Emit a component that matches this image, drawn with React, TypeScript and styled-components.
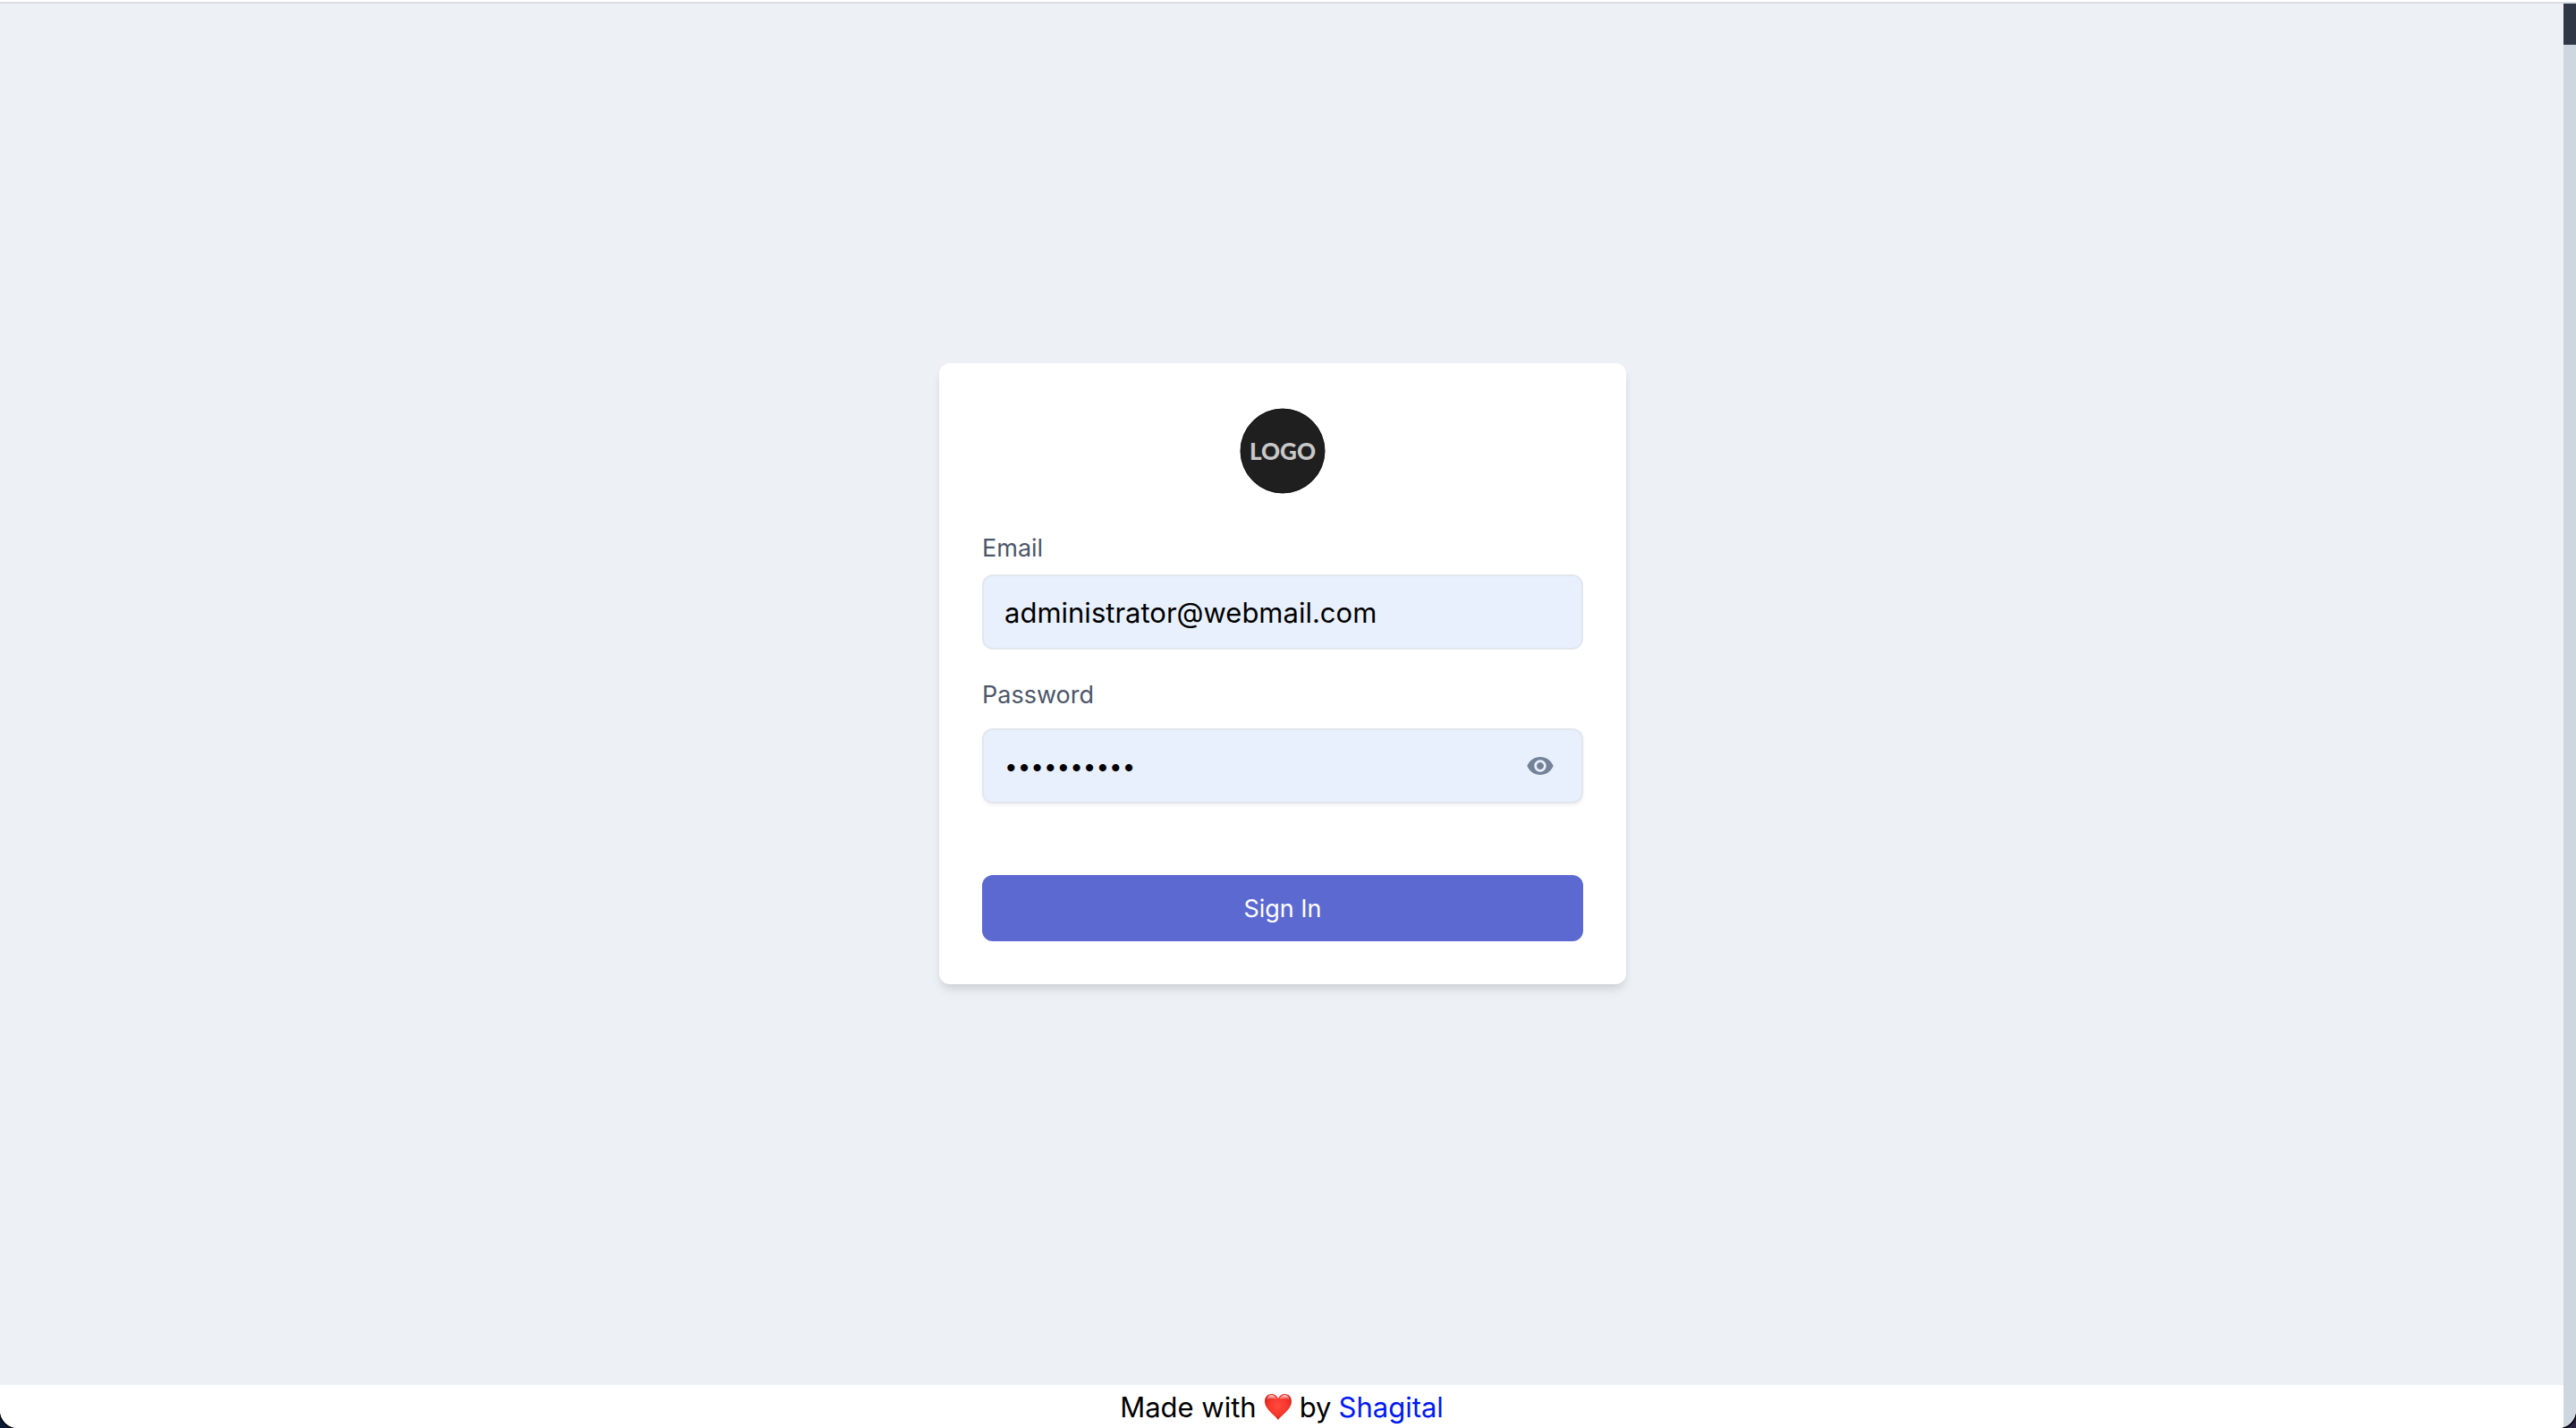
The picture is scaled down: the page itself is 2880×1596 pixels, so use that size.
import React, { useState } from "react";
import styled, { createGlobalStyle } from "styled-components";
import { MdVisibility, MdVisibilityOff } from "react-icons/md";

const GlobalStyle = createGlobalStyle`
  *, *::before, *::after { box-sizing: border-box; }
  body {
    margin: 0;
    background: linear-gradient(90deg, #0b1d36, #2a2542);
    color: #000;
    font-family: Inter, "Liberation Sans", sans-serif;
    font-size: 31px;
    line-height: 48px;
  }
`;

const Window = styled.div`
  display: flex;
  flex-direction: column;
  min-height: 100vh;
  overflow: hidden;
  border-radius: 0 0 20px 20px;
  border-top: 2px solid #fff;
  background: #fff;
  box-shadow: 0 0 0 2px #05070c;
`;

const Viewport = styled.div`
  display: flex;
  flex: 1;
  border-top: 2px solid #d9dce0;
`;

const Page = styled.div`
  display: flex;
  flex: 1;
  flex-direction: column;
`;

const Main = styled.main`
  display: flex;
  flex: 1;
  align-items: center;
  justify-content: center;
  padding: 0 0 46px 2px;
  background: #edf1f6;
`;

const Card = styled.form`
  display: flex;
  flex-direction: column;
  width: 768px;
  max-width: 100%;
  padding: 48px;
  border-radius: 12px;
  background: #fff;
  box-shadow: 0 8px 12px -2px rgba(0, 0, 0, 0.1), 0 4px 8px -2px rgba(0, 0, 0, 0.06);
`;

const Logo = styled.svg`
  align-self: center;
  width: 100px;
  height: 100px;
  margin-bottom: 38px;
`;

const Field = styled.div<{ $gap: number }>`
  display: flex;
  flex-direction: column;
  gap: ${(p) => p.$gap}px;
  margin-bottom: 30px;
`;

const Label = styled.label`
  color: #4c566a;
  font-size: 27px;
  line-height: 42px;
`;

const InputWrap = styled.div`
  position: relative;
  display: flex;
`;

const Input = styled.input<{ $raised?: boolean; $masked?: boolean }>`
  width: 100%;
  height: 84px;
  padding: 0 23px;
  border: 2px solid #e2e7ee;
  border-radius: 12px;
  outline: none;
  background: #e8f0fd;
  color: #000;
  font: inherit;
  font-size: ${(p) => (p.$masked ? 26 : 31)}px;
  box-shadow: ${(p) => (p.$raised ? "0 2px 4px rgba(0, 0, 0, 0.06)" : "none")};
`;

const Reveal = styled.button`
  position: absolute;
  top: 0;
  right: 0;
  bottom: 0;
  display: flex;
  align-items: center;
  padding: 0 32px 0 16px;
  border: 0;
  background: none;
  color: #748297;
  font-size: 32px;
  cursor: pointer;
`;

const Submit = styled.button`
  height: 74px;
  margin-top: 50px;
  padding: 2px 0 0;
  border: 0;
  border-radius: 12px;
  background: #5b69d0;
  color: #fff;
  font: inherit;
  font-size: 27px;
  cursor: pointer;
`;

const Footer = styled.footer`
  display: flex;
  align-items: center;
  justify-content: center;
  gap: 8px;
  height: 48px;
  padding-top: 2px;
  background: #fff;
`;

const Heart = styled.svg`
  width: 32px;
  height: 32px;
`;

const Link = styled.a`
  color: #0019f5;
  text-decoration: none;
`;

const ScrollTrack = styled.div`
  width: 14px;
  background: #ced6e0;
`;

const ScrollThumb = styled.div`
  height: 46px;
  background: #303747;
`;

export default function App() {
  const [visible, setVisible] = useState(false);
  return (
    <>
      <GlobalStyle />
      <Window>
        <Viewport>
          <Page>
            <Main>
              <Card onSubmit={(e: React.FormEvent) => e.preventDefault()}>
                <Logo viewBox="0 0 100 100" role="img" aria-label="Logo">
                  <circle cx="50" cy="50" r="47" fill="#1f1f1f" stroke="#111" strokeWidth="1" />
                  <text
                    x="50"
                    y="60"
                    textAnchor="middle"
                    fontFamily="Lato, sans-serif"
                    fontWeight="900"
                    fontSize="26"
                    fill="#c8c8c8"
                  >
                    LOGO
                  </text>
                </Logo>
                <Field $gap={8}>
                  <Label htmlFor="email">Email</Label>
                  <Input id="email" type="email" defaultValue="administrator@webmail.com" />
                </Field>
                <Field $gap={16}>
                  <Label htmlFor="password">Password</Label>
                  <InputWrap>
                    <Input
                      id="password"
                      type={visible ? "text" : "password"}
                      defaultValue="webmail123"
                      $raised
                      $masked={!visible}
                    />
                    <Reveal
                      type="button"
                      aria-label={visible ? "Hide password" : "Show password"}
                      onClick={() => setVisible(!visible)}
                    >
                      {visible ? <MdVisibilityOff /> : <MdVisibility />}
                    </Reveal>
                  </InputWrap>
                </Field>
                <Submit type="submit">Sign In</Submit>
              </Card>
            </Main>
            <Footer>
              <span>Made with</span>
              <Heart viewBox="0 0 32 32" role="img" aria-label="love">
                <defs>
                  <radialGradient id="heart" cx="0.5" cy="0.45" r="0.6">
                    <stop offset="0" stopColor="#ff4a3c" />
                    <stop offset="0.6" stopColor="#f5372c" />
                    <stop offset="1" stopColor="#c91c18" />
                  </radialGradient>
                  <linearGradient id="shine" x1="0" y1="0" x2="0" y2="1">
                    <stop offset="0" stopColor="#fff" stopOpacity="0.8" />
                    <stop offset="1" stopColor="#fff" stopOpacity="0" />
                  </linearGradient>
                </defs>
                <path
                  d="M16 30C13 25 1 18.500 1 9.500C1 4.500 4 1 8.500 1C12 1 14.800 3 16 6C17.200 3 20 1 23.500 1C28 1 31 4.500 31 9.500C31 18.500 19 25 16 30Z"
                  fill="url(#heart)"
                />
                <path d="M3 8C3.500 4 6 2 8.500 2C11 2 13.500 4 14.500 7C11 5.500 6 5.500 3 8Z" fill="url(#shine)" />
                <path d="M29 8C28.500 4 26 2 23.500 2C21 2 18.500 4 17.500 7C21 5.500 26 5.500 29 8Z" fill="url(#shine)" />
              </Heart>
              <span>by</span>
              <Link href="#">Shagital</Link>
            </Footer>
          </Page>
          <ScrollTrack>
            <ScrollThumb />
          </ScrollTrack>
        </Viewport>
      </Window>
    </>
  );
}
